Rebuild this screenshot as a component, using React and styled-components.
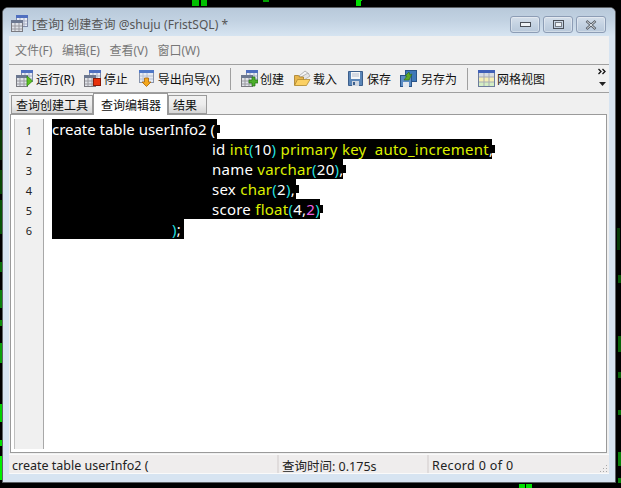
import React from "react";
import styled, { createGlobalStyle } from "styled-components";

const UI_FONT = `"Noto Sans", "Noto Sans CJK SC", sans-serif`;

const GlobalStyle = createGlobalStyle`
  html, body { margin: 0; padding: 0; background: #000; }
  body { width: 621px; height: 488px; overflow: hidden; font-family: ${UI_FONT}; }
`;

// bits of the green desktop that show round the window
const SPECKS = [
  { x: 192, y: 0, w: 7, h: 6, c: "#00c000" },
  { x: 201, y: 0, w: 6, h: 6, c: "#00c000" },
  { x: 263, y: 0, w: 6, h: 2, c: "#00a000" },
  { x: 356, y: 0, w: 5, h: 6, c: "#00e000" },
  { x: 361, y: 0, w: 1, h: 1, c: "#00e000" },
  { x: 0, y: 130, w: 2, h: 30, c: "#063a06" },
  { x: 0, y: 170, w: 2, h: 24, c: "#064806" },
  { x: 0, y: 200, w: 2, h: 34, c: "#075507" },
  { x: 0, y: 262, w: 2, h: 10, c: "#097009" },
  { x: 0, y: 290, w: 2, h: 18, c: "#0a800a" },
  { x: 0, y: 320, w: 2, h: 6, c: "#0a900a" },
  { x: 0, y: 343, w: 2, h: 20, c: "#0aa00a" },
  { x: 0, y: 404, w: 2, h: 18, c: "#00d000" },
  { x: 0, y: 440, w: 2, h: 6, c: "#00e000" },
  { x: 0, y: 456, w: 2, h: 24, c: "#00f000" },
  { x: 617, y: 228, w: 3, h: 22, c: "#063a06" },
  { x: 618, y: 275, w: 3, h: 8, c: "#075507" },
  { x: 618, y: 336, w: 3, h: 16, c: "#086008" },
  { x: 618, y: 372, w: 3, h: 6, c: "#086008" },
  { x: 618, y: 410, w: 3, h: 5, c: "#097009" },
  { x: 618, y: 452, w: 3, h: 14, c: "#0a800a" },
  { x: 618, y: 478, w: 3, h: 5, c: "#0a800a" },
  { x: 519, y: 484, w: 6, h: 4, c: "#00e000" },
  { x: 526, y: 484, w: 6, h: 4, c: "#00e000" },
];

const LINES = [
  { n: 1, indent: 0, width: 165, notch: true, tokens: [["w", "create table userInfo2 ("]] },
  {
    n: 2,
    indent: 160,
    width: 440,
    notch: true,
    tokens: [
      ["w", "id "], ["y", "int"], ["c", "("], ["w", "10"], ["c", ")"],
      ["y", " primary key  auto_increment"], ["w", ","],
    ],
  },
  {
    n: 3,
    indent: 160,
    width: 291,
    notch: true,
    tokens: [["w", "name "], ["y", "varchar"], ["c", "("], ["w", "20"], ["c", ")"], ["w", ","]],
  },
  {
    n: 4,
    indent: 160,
    width: 244,
    notch: true,
    tokens: [["w", "sex "], ["y", "char"], ["c", "("], ["w", "2"], ["c", ")"], ["w", ","]],
  },
  {
    n: 5,
    indent: 160,
    width: 268,
    notch: true,
    tokens: [["w", "score "], ["y", "float"], ["c", "("], ["w", "4,"], ["p", "2"], ["c", ")"]],
  },
  { n: 6, indent: 120, width: 132, notch: false, tokens: [["c", ")"], ["w", ";"]] },
];

const TOKEN_COLORS = { w: "#ffffff", y: "#dcf000", c: "#22dede", p: "#f060e0" };

function GridBase() {
  return (
    <>
      <rect x="5.5" y="0.5" width="11" height="11" fill="#e8ecf4" stroke="#7f8aa8" />
      <rect x="5" y="0" width="12" height="3" fill="#4f6fc0" />
      <path d="M9 3v8M13 3v8M6 6h10M6 9h10" stroke="#a6aec4" />
      <rect x="0.5" y="5.5" width="11" height="11" fill="#dfe2e8" stroke="#7a7a80" />
      <rect x="0" y="5" width="12" height="3" fill="#6c7890" />
      <path d="M4 8v8M8 8v8M1 11h10M1 14h10" stroke="#9a9aa0" />
    </>
  );
}

const Icons = {
  app: () => (
    <svg width="17" height="17" viewBox="0 0 17 17"><GridBase /></svg>
  ),
  run: () => (
    <svg width="17" height="17" viewBox="0 0 17 17">
      <GridBase />
      <path d="M11 6l5.5 5-5.5 5z" fill="#5fc21f" stroke="#2f8a10" strokeWidth="0.8" />
    </svg>
  ),
  stop: () => (
    <svg width="17" height="17" viewBox="0 0 17 17">
      <GridBase />
      <rect x="9.5" y="8.5" width="7" height="7" fill="#e8320c" stroke="#8a1a08" />
    </svg>
  ),
  exportTo: () => (
    <svg width="16" height="17" viewBox="0 0 16 17">
      <rect x="0.5" y="0.5" width="14" height="12" fill="#e6ebf4" stroke="#8894ac" />
      <rect x="0" y="0" width="15" height="3" fill="#4f78c8" />
      <path d="M4 3v9M8 3v9M1 6h13M1 9h13" stroke="#b8c0d0" />
      <path d="M5.5 8h4v4h2.5L7.5 16.5 3 12h2.5z" fill="#f5a81c" stroke="#a86408" strokeWidth="0.8" />
    </svg>
  ),
  create: () => (
    <svg width="17" height="17" viewBox="0 0 17 17">
      <GridBase />
      <path d="M11 7h3v3h3v3h-3v3h-3v-3H8v-3h3z" fill="#4cae2a" stroke="#246e14" strokeWidth="0.7" />
    </svg>
  ),
  open: () => (
    <svg width="17" height="17" viewBox="0 0 17 17">
      <path d="M5 6l6-5 4 3-6 5z" fill="#f4f4f4" stroke="#9a9a9a" strokeWidth="0.7" />
      <path d="M7 7l7-4 2 3-6 4z" fill="#e4e4e4" stroke="#a4a4a4" strokeWidth="0.7" />
      <path d="M0.5 5.5h4l1 1.5h4v8h-9z" fill="#e8b64c" stroke="#a67c28" strokeWidth="0.8" />
      <path d="M0.5 15.5l3-6h12.5l-3.5 6z" fill="#fbd063" stroke="#b08a30" strokeWidth="0.8" />
    </svg>
  ),
  save: () => (
    <svg width="15" height="15" viewBox="0 0 15 15">
      <path d="M0.5 0.5h14v14h-14z" fill="#5b86b8" stroke="#3c5f8c" />
      <rect x="3" y="1" width="9" height="7" fill="#f4f6f8" />
      <path d="M4 3h7M4 5h7" stroke="#b4bccc" />
      <rect x="4" y="10" width="7" height="5" fill="#cfd6e0" />
      <rect x="5" y="11" width="2" height="3" fill="#3c5f8c" />
    </svg>
  ),
  saveAs: () => (
    <svg width="17" height="17" viewBox="0 0 17 17">
      <rect x="5.5" y="0.5" width="11" height="11" fill="#3f78b8" stroke="#2a5488" />
      <rect x="0.5" y="5.5" width="11" height="11" fill="#5b8cc4" stroke="#2a5488" />
      <rect x="3" y="12" width="6" height="5" fill="#e4e8ee" />
      <path d="M4 10l3-4H5l4-4 1 3 2-1-3 6z" fill="#5fa826" stroke="#2f6c12" strokeWidth="0.6" />
    </svg>
  ),
  gridView: () => (
    <svg width="17" height="17" viewBox="0 0 17 17">
      <rect x="0.5" y="0.5" width="16" height="16" fill="#f6efb4" stroke="#6c7c9c" />
      <rect x="0" y="0" width="17" height="3" fill="#4060b8" />
      <rect x="1" y="3" width="15" height="4" fill="#d8dce4" />
      <rect x="1" y="12" width="15" height="4" fill="#d4eec4" />
      <path d="M6 3v13M11 3v13M1 7h15M1 12h15" stroke="#a8acb4" />
    </svg>
  ),
};

const TOOLS = [
  { icon: "run", label: "运行(R)", gap: 3, before: 0 },
  { icon: "stop", label: "停止", gap: 3, before: 9 },
  { icon: "exportTo", label: "导出向导(X)", gap: 3, before: 11 },
  { sep: true, before: 10 },
  { icon: "create", label: "创建", gap: 2, before: 10 },
  { icon: "open", label: "载入", gap: 2, before: 10 },
  { icon: "save", label: "保存", gap: 4, before: 11 },
  { icon: "saveAs", label: "另存为", gap: 4, before: 9 },
  { sep: true, before: 10 },
  { icon: "gridView", label: "网格视图", gap: 2, before: 10 },
];

export default function App() {
  return (
    <Desktop>
      <GlobalStyle />
      {SPECKS.map((s, i) => (
        <Speck key={i} style={{ left: s.x, top: s.y, width: s.w, height: s.h, background: s.c }} />
      ))}
      <Window>
        <TitleBar>
          <TitleIcon><Icons.app /></TitleIcon>
          <TitleText>[查询] 创建查询 @shuju (FristSQL) *</TitleText>
          <WindowButtons>
            <WinButton aria-label="最小化">
              <svg width="11" height="6" viewBox="0 0 11 6">
                <rect x="0.5" y="0.5" width="10" height="4" fill="#eef2f6" stroke="#4a4f58" />
              </svg>
            </WinButton>
            <WinButton aria-label="最大化">
              <svg width="11" height="10" viewBox="0 0 11 10">
                <rect x="0.5" y="0.5" width="10" height="8" fill="none" stroke="#4a4f58" />
                <rect x="2.5" y="2.5" width="6" height="4" fill="#eef2f6" stroke="#7a8088" />
              </svg>
            </WinButton>
            <WinButton aria-label="关闭">
              <svg width="12" height="10" viewBox="0 0 12 10">
                <path d="M1.5 1l9 8M10.5 1l-9 8" stroke="#596068" strokeWidth="2.4" />
                <path d="M2 1.5l8 7M10 1.5l-8 7" stroke="#eef2f6" strokeWidth="0.9" />
              </svg>
            </WinButton>
          </WindowButtons>
        </TitleBar>

        <Body>
          <MenuBar>
            {["文件(F)", "编辑(E)", "查看(V)", "窗口(W)"].map(m => (
              <MenuItem key={m}>{m}</MenuItem>
            ))}
          </MenuBar>

          <Toolbar>
            {TOOLS.map((t, i) => {
              if (t.sep) return <ToolSep key={i} $before={t.before} />;
              const Glyph = Icons[t.icon];
              return (
                <ToolButton key={t.icon} $before={t.before} $gap={t.gap}>
                  <Glyph />
                  <span>{t.label}</span>
                </ToolButton>
              );
            })}
            <Overflow>
              <svg width="9" height="7" viewBox="0 0 9 7">
                <path d="M0.5 1l2.5 2.5L0.5 6M4.5 1L7 3.5 4.5 6" fill="none" stroke="#111" strokeWidth="1.3" />
              </svg>
              <svg width="7" height="4" viewBox="0 0 7 4">
                <path d="M0 0h7L3.5 4z" fill="#222" />
              </svg>
            </Overflow>
          </Toolbar>

          <TabRow>
            <Tab $pad="0 4px">查询创建工具</Tab>
            <Tab $active $pad="0 6px 0 7px">查询编辑器</Tab>
            <Tab $pad="0 9px 0 4px">结果</Tab>
          </TabRow>

          <EditorPanel>
            <Editor>
              <Gutter>
                {LINES.map(l => (
                  <LineNo key={l.n}>{l.n}</LineNo>
                ))}
              </Gutter>
              <Code>
                {LINES.map(l => (
                  <Selected key={l.n} $indent={l.indent} $notch={l.notch} style={{ width: l.width }}>
                    {l.tokens.map(([kind, text], i) => (
                      <Token key={i} $kind={kind}>{text}</Token>
                    ))}
                  </Selected>
                ))}
              </Code>
            </Editor>
          </EditorPanel>

          <StatusBar>
            <StatusCell $width={270}>create table userInfo2 (</StatusCell>
            <StatusCell $width={150}>查询时间: 0.175s</StatusCell>
            <StatusCell $width={179} $track={0.35}>Record 0 of 0</StatusCell>
            <Grip width="9" height="9" viewBox="0 0 9 9">
              <path d="M7 1h1v1H7zM4 4h1v1H4zM7 4h1v1H7zM1 7h1v1H1zM4 7h1v1H4zM7 7h1v1H7z" fill="#a8a8a8" />
            </Grip>
          </StatusBar>
        </Body>
      </Window>
    </Desktop>
  );
}

const Desktop = styled.div`
  position: relative;
  width: 621px;
  height: 488px;
  padding: 7px 0 0 2px;
  box-sizing: border-box;
  background: #000;
  overflow: hidden;
`;

const Speck = styled.i`
  position: absolute;
  display: block;
`;

const Window = styled.div`
  width: 614px;
  height: 476px;
  box-sizing: border-box;
  display: flex;
  flex-direction: column;
  border: 1px solid #5c6064;
  border-radius: 6px 6px 0 0;
  background: #d7e4f1;
  color: #000;
`;

const TitleBar = styled.div`
  flex: none;
  height: 28px;
  display: flex;
  align-items: center;
  padding: 0 9px 0 8px;
  border-radius: 5px 5px 0 0;
  background: linear-gradient(180deg, #b8c9da 0%, #c2d2e2 45%, #d6e4f1 100%);
`;

const TitleIcon = styled.span`
  display: flex;
  margin-right: 4px;
  margin-top: 3px;
`;

const TitleText = styled.span`
  flex: 1;
  margin-top: 4px;
  font-size: 12px;
  letter-spacing: 0.05px;
  color: #555;
  white-space: pre;
`;

const WindowButtons = styled.div`
  display: flex;
  gap: 3px;
  margin-top: 5px;
`;

const WinButton = styled.button`
  width: 30px;
  height: 17px;
  padding: 0;
  display: flex;
  align-items: center;
  justify-content: center;
  border: 1px solid #8d9db5;
  border-radius: 3px;
  background: linear-gradient(180deg, #d5dfea 0%, #c4d2e2 50%, #b8c8da 100%);
  box-shadow: inset 0 0 0 1px rgba(255, 255, 255, 0.35);
`;

const Body = styled.div`
  flex: 1;
  min-height: 0;
  margin: 0 6px 8px;
  display: flex;
  flex-direction: column;
  background: #f0f0f0;
`;

const MenuBar = styled.div`
  flex: none;
  height: 28px;
  display: flex;
  align-items: center;
  gap: 9.6px;
  padding-left: 6px;
`;

const MenuItem = styled.span`
  font-size: 12px;
  color: #777;
`;

const Toolbar = styled.div`
  flex: none;
  position: relative;
  height: 29px;
  box-sizing: border-box;
  display: flex;
  align-items: center;
  padding-left: 7px;
  border-top: 1px solid #a0a0a0;
  border-bottom: 1px solid #a0a0a0;
  background: #f0f0f0;
`;

const ToolButton = styled.div`
  display: flex;
  align-items: center;
  gap: ${({ $gap }) => $gap}px;
  margin-left: ${({ $before }) => $before}px;
  font-size: 12px;
  color: #111;
  white-space: pre;
`;

const ToolSep = styled.div`
  width: 1px;
  height: 22px;
  margin-left: ${({ $before }) => $before}px;
  background: #a0a0a0;
`;

const Overflow = styled.div`
  position: absolute;
  right: 2px;
  top: 3px;
  display: flex;
  flex-direction: column;
  align-items: center;
  gap: 7px;
`;

const TabRow = styled.div`
  flex: none;
  height: 21px;
  display: flex;
  align-items: flex-end;
  padding-left: 2px;
  position: relative;
  z-index: 1;
`;

const Tab = styled.div`
  box-sizing: border-box;
  height: ${({ $active }) => ($active ? 22 : 19)}px;
  margin-bottom: ${({ $active }) => ($active ? -1 : 0)}px;
  padding: ${({ $pad }) => $pad};
  display: flex;
  align-items: center;
  font-size: 12px;
  color: #111;
  border: 1px solid #9a9a9a;
  border-bottom: ${({ $active }) => ($active ? "0" : "1px solid #9a9a9a")};
  background: ${({ $active }) =>
    $active ? "#ffffff" : "linear-gradient(180deg, #f2f2f2 0%, #ececec 50%, #d6d6d6 100%)"};
`;

const EditorPanel = styled.div`
  flex: 1;
  min-height: 0;
  margin: 0 2px 0 1px;
  padding: 4px 1px 3px 3px;
  background: #fff;
  border: 1px solid #9a9a9a;
  display: flex;
`;

const Editor = styled.div`
  flex: 1;
  display: flex;
`;

const Gutter = styled.div`
  flex: none;
  width: 30px;
  box-sizing: border-box;
  background: #f0f0f0;
  border-left: 1px solid #c0c0c0;
  border-right: 1px solid #a8a8a8;
`;

const LineNo = styled.div`
  height: 20px;
  line-height: 23px;
  text-align: center;
  font-size: 11px;
  color: #222;
`;

const Code = styled.div`
  flex: 1;
  padding-left: 8px;
  font-family: "Noto Sans", sans-serif;
  font-size: 15px;
`;

const Selected = styled.div`
  position: relative;
  height: 20px;
  line-height: 20px;
  box-sizing: border-box;
  padding-left: ${({ $indent }) => $indent}px;
  letter-spacing: ${({ $indent }) => ($indent ? 0.25 : -0.03)}px;
  background: #000;
  white-space: pre;

  &::after {
    content: "";
    display: ${({ $notch }) => ($notch ? "block" : "none")};
    position: absolute;
    right: -3px;
    top: 6px;
    width: 3px;
    height: 8px;
    background: #000;
  }
`;

const Token = styled.span`
  color: ${({ $kind }) => TOKEN_COLORS[$kind]};
`;

const StatusBar = styled.div`
  flex: none;
  position: relative;
  height: 20px;
  margin-top: 1px;
  box-sizing: border-box;
  display: flex;
  align-items: center;
  border-top: 1px solid #fafafa;
  border-bottom: 1px solid #fafafa;
  background: #efeded;
`;

const StatusCell = styled.div`
  width: ${({ $width }) => $width}px;
  height: 100%;
  box-sizing: border-box;
  padding: 3px 0 0 3px;
  display: flex;
  align-items: center;
  font-size: 12.5px;
  letter-spacing: ${({ $track }) => $track || 0}px;
  color: #222;
  white-space: pre;
  border-right: 2px solid #e0dcdc;

  &:last-of-type {
    border-right: 0;
  }
`;

const Grip = styled.svg`
  position: absolute;
  right: 1px;
  bottom: 0;
`;
